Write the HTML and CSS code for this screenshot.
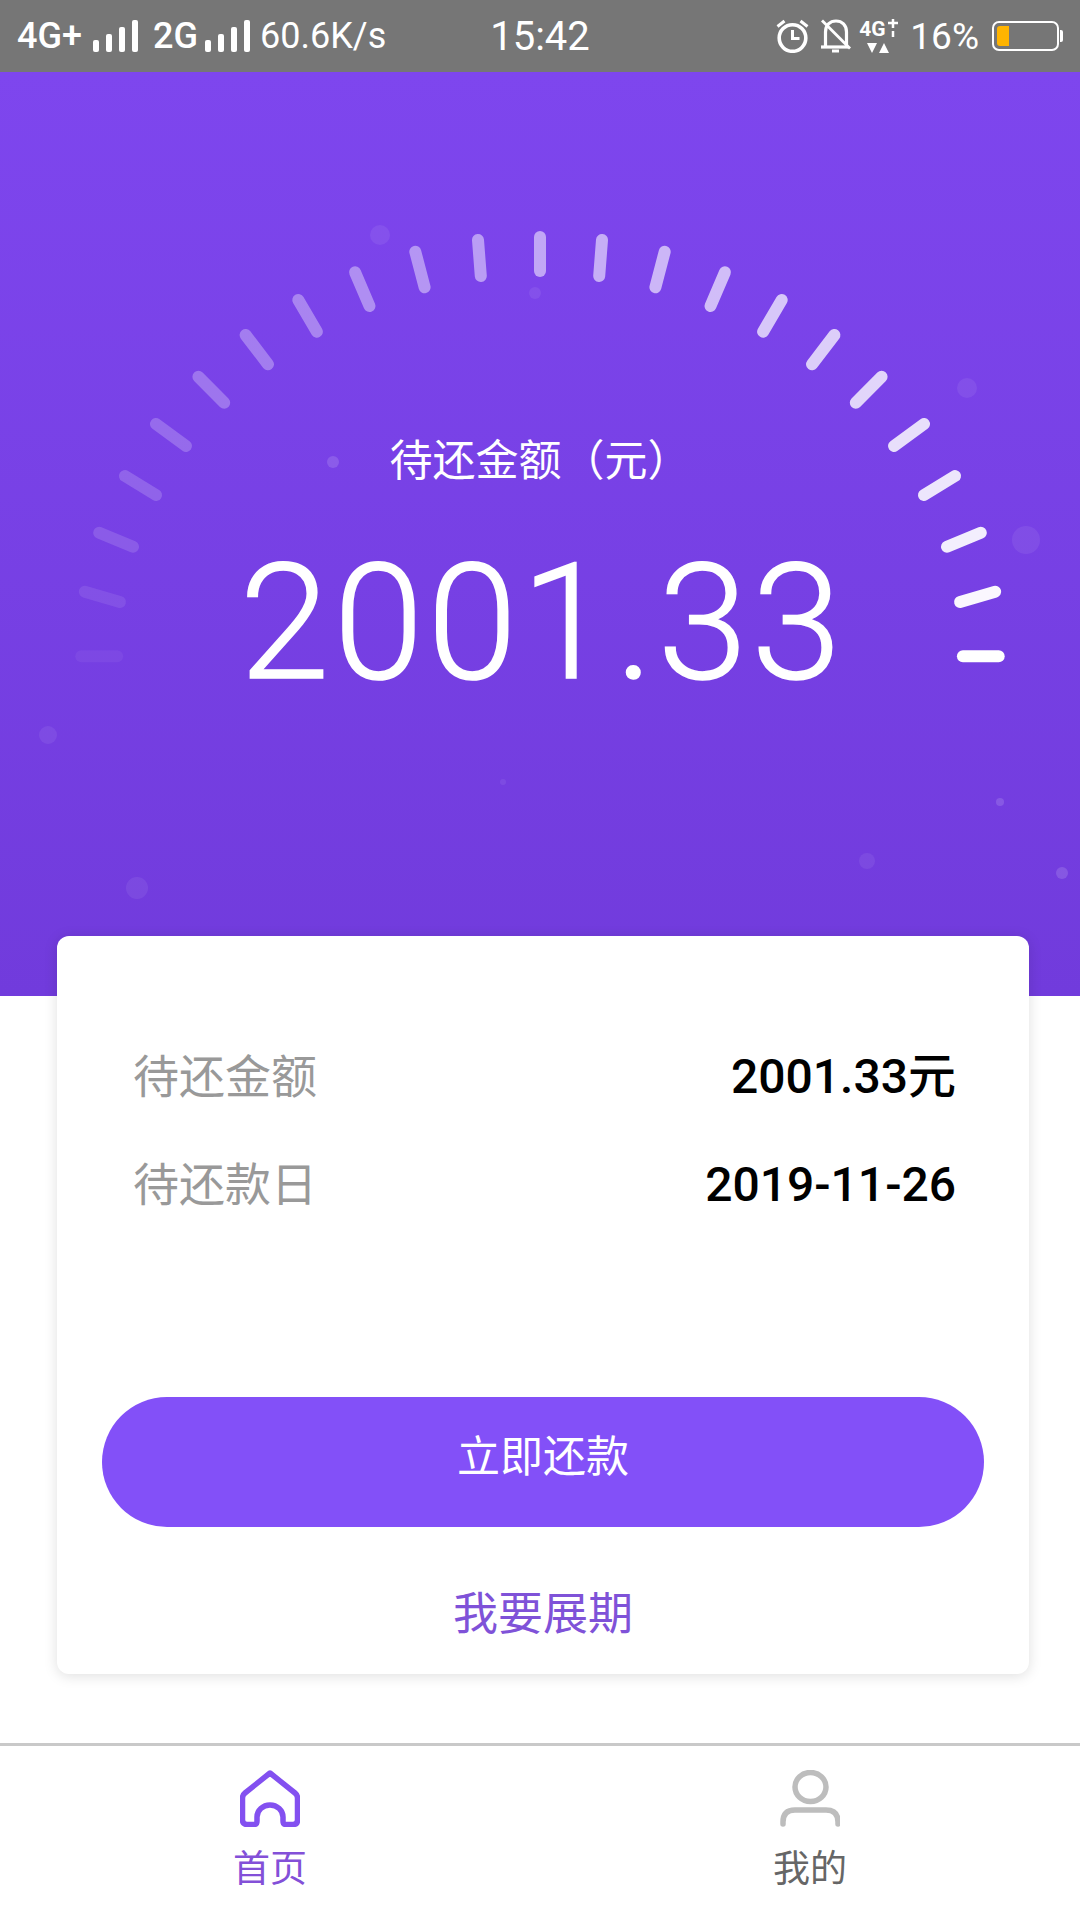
FILE: index.html
```html
<!DOCTYPE html>
<html lang="zh-CN">
<head>
  <meta charset="UTF-8">
  <meta name="viewport" content="width=device-width, initial-scale=1.0">
  <title>首页</title>
  <link rel="stylesheet" href="styles.css">
</head>
<body>
  <div class="page">
    <div class="statusBar">
      <div class="statusLeft">
        <span class="net">4G+</span>
        <svg class="signal" width="45" height="32" viewBox="0 0 45 32"><rect x="0" y="20" width="6" height="12" rx="2"/><rect x="13" y="14" width="6" height="18" rx="2"/><rect x="26" y="7" width="6" height="25" rx="2"/><rect x="39" y="0" width="6" height="32" rx="2"/></svg>
        <span class="net net2">2G</span>
        <svg class="signal" width="45" height="32" viewBox="0 0 45 32"><rect x="0" y="20" width="6" height="12" rx="2"/><rect x="13" y="14" width="6" height="18" rx="2"/><rect x="26" y="7" width="6" height="25" rx="2"/><rect x="39" y="0" width="6" height="32" rx="2"/></svg>
        <span class="speed">60.6K/s</span>
      </div>
      <div class="time">15:42</div>
      <div class="statusRight">
        <svg class="alarm" width="33" height="34" viewBox="0 0 33 34" fill="none" stroke="#fff">
          <circle cx="16.500" cy="19" r="13.300" stroke-width="3.600"/>
          <path d="M16.500 11v8.500h7" stroke-width="3"/>
          <path d="M1.500 7.500l7-5.500M31.500 7.500l-7-5.500" stroke-width="3"/>
        </svg>
        <svg class="bell" width="30" height="34" viewBox="0 0 30 34" fill="none" stroke="#fff">
          <path d="M4.500 27V13C4.500 6 9 2 15 2s10.500 4 10.500 11v14" stroke-width="3.200"/>
          <path d="M0 28h27" stroke-width="3.200"/>
          <path d="M11 32h7" stroke-width="3"/>
          <path d="M1 1.500l28 28" stroke-width="2.800"/>
        </svg>
        <div class="dataIcon">
          <div class="dataTop">
            <span>4G</span>
            <svg width="10" height="18" viewBox="0 0 10 18" fill="none" stroke="#fff" stroke-width="2.500"><path d="M5 0v9M0 4h10M5 12v6"/></svg>
          </div>
          <svg class="dataArrows" width="22" height="11" viewBox="0 0 22 11" fill="#fff"><path d="M0 1h10l-5 10zM12 11h10l-5-10z"/></svg>
        </div>
        <span class="percent">16%</span>
        <div class="battery"><div class="batteryFill"></div></div>
        <div class="batteryCap"></div>
      </div>
    </div>

    <div class="hero">
      <svg class="gauge" width="1080" height="924" viewBox="0 72 1080 924">
        <g fill="#fff" fill-opacity="0.07">
          <circle cx="380" cy="235" r="10"/>
          <circle cx="535" cy="293" r="6"/>
          <circle cx="333" cy="462" r="6" fill-opacity="0.14"/>
          <circle cx="967" cy="388" r="10"/>
          <circle cx="1026" cy="540" r="14"/>
          <circle cx="48" cy="735" r="9"/>
          <circle cx="503" cy="782" r="3"/>
          <circle cx="1000" cy="802" r="4" fill-opacity="0.14"/>
          <circle cx="1062" cy="873" r="6" fill-opacity="0.14"/>
          <circle cx="867" cy="861" r="8"/>
          <circle cx="137" cy="888" r="11"/>
        </g>
        <g stroke="#fff" stroke-width="12" stroke-linecap="round">
          <line x1="81.300" y1="656.300" x2="117.100" y2="656.300" stroke-opacity="0.05"/>
          <line x1="84.800" y1="591.700" x2="119.900" y2="602" stroke-opacity="0.09"/>
          <line x1="99.200" y1="532.700" x2="133" y2="546.700" stroke-opacity="0.14"/>
          <line x1="125" y1="476" x2="156" y2="495" stroke-opacity="0.18"/>
          <line x1="156" y1="424" x2="186" y2="446" stroke-opacity="0.22"/>
          <line x1="198.400" y1="376.700" x2="224.200" y2="402.700" stroke-opacity="0.27"/>
          <line x1="245.600" y1="335" x2="268" y2="364.300" stroke-opacity="0.31"/>
          <line x1="298.300" y1="300" x2="316.900" y2="331.700" stroke-opacity="0.35"/>
          <line x1="355.100" y1="272.300" x2="369.500" y2="306" stroke-opacity="0.40"/>
          <line x1="415.300" y1="251.700" x2="424.600" y2="287.300" stroke-opacity="0.44"/>
          <line x1="478" y1="240" x2="480.800" y2="276" stroke-opacity="0.48"/>
          <line x1="540" y1="237" x2="540" y2="271" stroke-opacity="0.53"/>
          <line x1="602" y1="240" x2="599.200" y2="276" stroke-opacity="0.57"/>
          <line x1="664.700" y1="251.700" x2="655.400" y2="287.300" stroke-opacity="0.61"/>
          <line x1="724.900" y1="272.300" x2="710.500" y2="306" stroke-opacity="0.65"/>
          <line x1="781.700" y1="300" x2="763.100" y2="331.700" stroke-opacity="0.70"/>
          <line x1="834.400" y1="335" x2="812" y2="364.300" stroke-opacity="0.74"/>
          <line x1="881.600" y1="376.700" x2="855.800" y2="402.700" stroke-opacity="0.78"/>
          <line x1="924" y1="424" x2="894" y2="446" stroke-opacity="0.83"/>
          <line x1="955" y1="476" x2="924" y2="495" stroke-opacity="0.87"/>
          <line x1="980.800" y1="532.700" x2="947" y2="546.700" stroke-opacity="0.91"/>
          <line x1="995.200" y1="591.700" x2="960.100" y2="602" stroke-opacity="0.96"/>
          <line x1="998.700" y1="656.300" x2="962.900" y2="656.300" stroke-opacity="1"/>
        </g>
      </svg>
      <div class="heroLabel">待还金额<span class="paren">（</span>元<span class="paren">）</span></div>
      <div class="heroAmount">2001.33</div>
    </div>

    <div class="card">
      <div class="row">
        <span class="rowLabel">待还金额</span>
        <span class="rowValue">2001.33元</span>
      </div>
      <div class="row">
        <span class="rowLabel">待还款日</span>
        <span class="rowValue">2019-11-26</span>
      </div>
      <div class="payBtn">立即还款</div>
      <div class="extend">我要展期</div>
    </div>

    <div class="tabBar">
      <div class="tab tabActive">
        <svg width="60" height="57" viewBox="0 0 60 57" fill="none" stroke="#8350f0" stroke-width="5.500" stroke-linejoin="round">
          <path d="M30 3L55 23Q57.500 25 57.500 28V50Q57.500 54.500 53 54.500H46Q43 54.500 43 51V47A13 12 0 0 0 17 47V51Q17 54.500 14 54.500H7Q2.500 54.500 2.500 50V28Q2.500 25 5 23Z"/>
        </svg>
        <span>首页</span>
      </div>
      <div class="tab">
        <svg width="60" height="57" viewBox="0 0 60 57" fill="none" stroke="#bdbdbd" stroke-width="5.500" stroke-linecap="round">
          <ellipse cx="30.500" cy="17" rx="15.500" ry="14.500"/>
          <path d="M3 54V52Q3 40 15 40H46Q58 40 58 52V54"/>
        </svg>
        <span>我的</span>
      </div>
    </div>
  </div>
</body>
</html>
```

FILE: styles.css
```css
* {
  box-sizing: border-box;
}
html, body {
  margin: 0;
  padding: 0;
}
body {
  background-color: #fff;
  font-family: Roboto, "Noto Sans CJK SC", sans-serif;
}
.page {
  width: 1080px;
  height: 1920px;
  overflow: hidden;
  display: flex;
  flex-direction: column;
}

.statusBar {
  height: 72px;
  flex: none;
  display: flex;
  align-items: center;
  padding: 0 17px;
  background-color: #767676;
  color: #fff;
}
.statusLeft, .statusRight {
  flex: 1;
  display: flex;
  align-items: center;
}
.statusRight {
  justify-content: flex-end;
}
.net {
  font-size: 36px;
  font-weight: 500;
  width: 76px;
}
.net2 {
  width: 52px;
  margin-left: 15px;
}
.signal {
  fill: #fff;
}
.speed {
  font-size: 36px;
  margin-left: 10px;
}
.time {
  font-size: 40px;
}
.alarm {
  margin-right: 12px;
}
.bell {
  margin-right: 7px;
}
.dataIcon {
  width: 40px;
  height: 34px;
  margin-right: 12px;
  display: flex;
  flex-direction: column;
  align-items: center;
}
.dataTop {
  display: flex;
  align-items: flex-start;
  gap: 2px;
  height: 20px;
  font-size: 21px;
  font-weight: 700;
  line-height: 20px;
}
.dataArrows {
  margin-top: 3px;
}
.percent {
  font-size: 37px;
  margin-right: 13px;
}
.battery {
  width: 67px;
  height: 30px;
  border: 2px solid #fff;
  border-radius: 7px;
  padding: 3px;
}
.batteryFill {
  width: 12px;
  height: 20px;
  background-color: #ffb400;
  border-radius: 3px 0 0 3px;
}
.batteryCap {
  width: 3px;
  height: 12px;
  margin-left: 1px;
  background-color: #fff;
  border-radius: 0 2px 2px 0;
}

.hero {
  position: relative;
  height: 924px;
  flex: none;
  padding-top: 355px;
  text-align: center;
  color: #fff;
  background: linear-gradient(180deg, #7e46ee, #713bdc);
}
.gauge {
  position: absolute;
  top: 0;
  left: 0;
}
.heroLabel {
  position: relative;
  height: 60px;
  font-size: 43px;
  line-height: 60px;
}
/* TC 的括号在字框中间，和原图一样 */
.paren {
  font-family: "Noto Sans CJK TC", sans-serif;
}
.heroAmount {
  position: relative;
  font-size: 162px;
  font-weight: 300;
  line-height: 166px;
  letter-spacing: 4px;
  margin-top: 53px;
  padding-left: 5px;
  -webkit-text-stroke: 1.5px #fff;
}

.card {
  position: relative;
  flex: none;
  height: 738px;
  margin: -60px 51px 0 57px;
  padding: 87px 0 0;
  background-color: #fff;
  border-radius: 12px;
  box-shadow: 0 2px 14px rgba(0, 0, 0, .13);
}
.row {
  height: 108px;
  display: flex;
  align-items: center;
  justify-content: space-between;
  padding: 0 73px 0 76px;
}
.rowLabel {
  font-size: 46px;
  line-height: 60px;
  color: #999;
}
.rowValue {
  font-size: 48px;
  font-weight: 500;
  line-height: 60px;
  color: #000;
}
.payBtn {
  height: 130px;
  margin: 158px 45px 0;
  border-radius: 65px;
  background-color: #8350f8;
  color: #fff;
  font-size: 43px;
  line-height: 120px;
  text-align: center;
}
.extend {
  margin-top: 53px;
  font-size: 45px;
  line-height: 70px;
  text-align: center;
  color: #7f52d8;
}

.tabBar {
  flex: none;
  height: 177px;
  margin-top: 69px;
  display: flex;
  border-top: 3px solid #c9c9c9;
}
.tab {
  flex: 1;
  display: flex;
  flex-direction: column;
  align-items: center;
  padding-top: 24px;
  font-size: 37px;
  line-height: 50px;
  color: #666;
}
.tab svg {
  display: block;
  margin-bottom: 18px;
}
.tabActive {
  color: #8350d8;
}
```
